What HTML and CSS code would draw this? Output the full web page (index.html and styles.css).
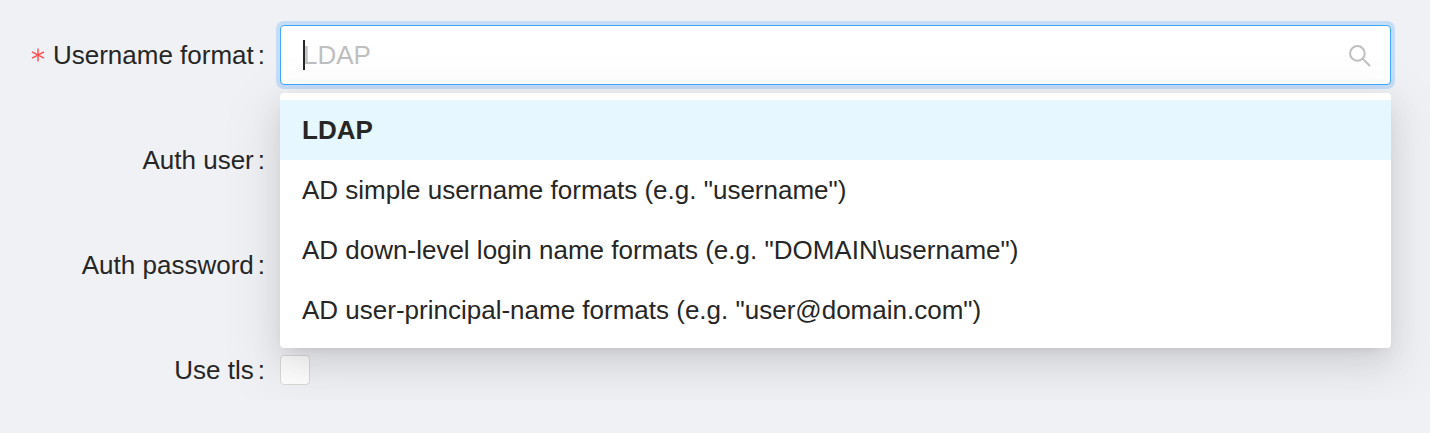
FILE: index.html
```html
<!DOCTYPE html>
<html lang="en">
<head>
<meta charset="utf-8">
<title>LDAP settings</title>
<link rel="stylesheet" href="styles.css">
</head>
<body>
<form class="form">
  <div class="row">
    <label class="label" for="format"><svg class="required" viewBox="0 0 14 14" aria-hidden="true"><path d="M7 0.5v13M1 3.8l12 6.4M13 3.8L1 10.2"/></svg>Username format<span class="colon">:</span></label>
    <div class="select">
      <input class="search" id="format" type="text" placeholder="LDAP" autocomplete="off">
      <span class="caret"></span>
      <svg class="icon" viewBox="0 0 22 22" aria-hidden="true"><circle cx="8.4" cy="8.4" r="7.3"/><path d="M13.6 13.6L21 21"/></svg>
      <ul class="menu" role="listbox">
        <li class="option selected" role="option" aria-selected="true">LDAP</li>
        <li class="option" role="option">AD simple username formats (e.g. "username")</li>
        <li class="option" role="option">AD down-level login name formats (e.g. "DOMAIN\username")</li>
        <li class="option" role="option">AD user-principal-name formats (e.g. "user@domain.com")</li>
      </ul>
    </div>
  </div>
  <div class="row">
    <label class="label" for="user">Auth user<span class="colon">:</span></label>
    <input class="field" id="user" type="text">
  </div>
  <div class="row">
    <label class="label" for="password">Auth password<span class="colon">:</span></label>
    <input class="field" id="password" type="password">
  </div>
  <div class="row">
    <label class="label" for="tls">Use tls<span class="colon">:</span></label>
    <input class="check" id="tls" type="checkbox">
  </div>
</form>
</body>
</html>
```
FILE: styles.css
```css
* { box-sizing: border-box; }
body {
  margin: 0;
  background: #f0f1f5;
  color: #262626;
  font: 26px/60px "Liberation Sans", Arial, sans-serif;
}
.form {
  display: flex;
  flex-direction: column;
  gap: 45px;
  padding: 25px 39px 0 0;
}
.row {
  display: grid;
  grid-template-columns: 265px 1fr;
  column-gap: 15px;
  align-items: center;
  height: 60px;
}
.label {
  display: flex;
  justify-content: flex-end;
  align-items: center;
  white-space: nowrap;
}
.colon { margin-left: 4px; }
.required {
  width: 14px;
  height: 14px;
  margin-right: 8px;
  fill: none;
  stroke: #ff4d4f;
  stroke-width: 1.4;
}
.select { position: relative; }
.search, .field {
  display: block;
  width: 100%;
  height: 60px;
  padding: 0 60px 0 22px;
  border: 1px solid #d9d9d9;
  border-radius: 4px;
  background: #fff;
  color: inherit;
  font: inherit;
  outline: none;
}
.search {
  border-color: #40a9ff;
  box-shadow: 0 0 0 4px rgba(24, 144, 255, 0.2);
}
.search::placeholder { color: #bfbfbf; opacity: 1; }
.caret {
  position: absolute;
  left: 23px;
  top: 15px;
  width: 2px;
  height: 30px;
  background: #262626;
}
.icon {
  position: absolute;
  right: 20px;
  top: 20px;
  width: 22px;
  height: 22px;
  fill: none;
  stroke: #bfbfbf;
  stroke-width: 2;
}
.menu {
  position: absolute;
  z-index: 1;
  top: 100%;
  left: 0;
  right: 0;
  margin: 8px 0 0;
  padding: 7px 0 8px;
  list-style: none;
  background: #fff;
  border-radius: 4px;
  box-shadow: 0 6px 12px -8px rgba(0, 0, 0, 0.12), 0 12px 32px rgba(0, 0, 0, 0.1), 0 18px 56px 16px rgba(0, 0, 0, 0.05);
}
.option { padding: 0 22px; }
.selected { background: #e6f7ff; font-weight: 700; }
.check {
  appearance: none;
  width: 30px;
  height: 30px;
  margin: 0;
  border: 1px solid #d9d9d9;
  border-radius: 4px;
  background: #fff;
}
```
